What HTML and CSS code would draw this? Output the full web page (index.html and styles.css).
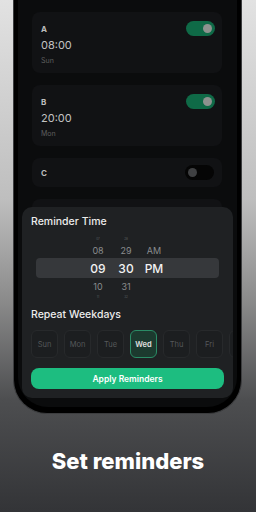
FILE: index.html
```html
<!DOCTYPE html>
<html lang="en">
<head>
    <meta charset="UTF-8">
    <meta name="viewport" content="width=device-width, initial-scale=1.0">
    <title>Set reminders</title>
    <link rel="stylesheet" href="styles.css">
</head>
<body>

<div class="phone">
    <div class="screen">
        <div class="cards">
            <div class="card">
                <div class="card-info">
                    <div class="card-name">A</div>
                    <div class="card-time">08:00</div>
                    <div class="card-days">Sun</div>
                </div>
                <div class="toggle on"><span class="knob"></span></div>
            </div>
            <div class="card">
                <div class="card-info">
                    <div class="card-name">B</div>
                    <div class="card-time">20:00</div>
                    <div class="card-days">Mon</div>
                </div>
                <div class="toggle on"><span class="knob"></span></div>
            </div>
            <div class="card card-small">
                <div class="card-info">
                    <div class="card-name">C</div>
                </div>
                <div class="toggle"><span class="knob"></span></div>
            </div>
            <div class="card card-small"></div>
        </div>

        <!-- bottom sheet -->
        <div class="sheet">
            <div class="sheet-title">Reminder Time</div>
            <div class="picker">
                <div class="pick-row far"><span>07</span><span>28</span><span></span></div>
                <div class="pick-row"><span>08</span><span>29</span><span>AM</span></div>
                <div class="pick-row selected"><span>09</span><span>30</span><span>PM</span></div>
                <div class="pick-row"><span>10</span><span>31</span><span></span></div>
                <div class="pick-row far"><span>11</span><span>32</span><span></span></div>
            </div>
            <div class="sheet-title">Repeat Weekdays</div>
            <div class="days">
                <div class="day">Sun</div>
                <div class="day">Mon</div>
                <div class="day">Tue</div>
                <div class="day active">Wed</div>
                <div class="day">Thu</div>
                <div class="day">Fri</div>
                <div class="day"></div>
            </div>
            <button class="apply-btn">Apply Reminders</button>
        </div>
    </div>
</div>

<h1 class="caption">Set reminders</h1>

</body>
</html>
```

FILE: styles.css
```css
body {
    margin: 0;
    width: 256px;
    height: 512px;
    overflow: hidden;
    font-family: 'Inter', 'Liberation Sans', sans-serif;
    background: linear-gradient(#e2e2e2 0px, #bebebe 200px, #8b8b8b 300px, #4d4e50 400px, #333437 512px);
}
.phone {
    box-sizing: border-box;
    width: 229px;
    height: 434px;
    margin: -20px 0 0 13px;
    padding: 0 4px 6px 4px;
    background-color: #000;
    border: 1px solid #3c3d3f;
    border-top: none;
    border-radius: 0 0 34px 34px;
}
.screen {
    position: relative;
    height: 100%;
    background-color: #0b0c0d;
    border-radius: 0 0 30px 30px;
    overflow: hidden;
}
.cards {
    display: flex;
    flex-direction: column;
    gap: 12px;
    padding: 32px 15px 0 14px;
}
.card {
    display: flex;
    justify-content: space-between;
    align-items: flex-start;
    background-color: #111214;
    border-radius: 8px;
    padding: 9px 7px 7px 9px;
}
.card-small {
    align-items: center;
    padding: 7px 8px 7px 9px;
    min-height: 15px;
}
.card-info {
    display: flex;
    flex-direction: column;
}
.card-name {
    font-size: 8px;
    font-weight: 700;
    line-height: 12px;
    color: #bdbdbd;
    margin-top: 2px;
}
.card-small .card-name {
    margin-top: 0;
}
.card-time {
    font-size: 11px;
    line-height: 15px;
    color: #c2c2c2;
    margin-top: 3px;
}
.card-days {
    font-size: 7px;
    line-height: 10px;
    color: #5f5f5f;
    margin-top: 3px;
}
.toggle {
    display: flex;
    align-items: center;
    box-sizing: border-box;
    width: 29px;
    height: 15px;
    padding: 0 3px;
    border-radius: 8px;
    background-color: #050505;
}
.toggle.on {
    background-color: #0f6a47;
    justify-content: flex-end;
}
.knob {
    width: 9px;
    height: 9px;
    border-radius: 50%;
    background-color: #3f4042;
}
.toggle.on .knob {
    background-color: #8e928f;
}

/* bottom sheet */
.sheet {
    position: absolute;
    left: 4px;
    right: 4px;
    bottom: 9px;
    padding: 7px 0 9px 9px;
    background-color: #1f2123;
    border-radius: 10px;
    overflow: hidden;
}
.sheet-title {
    font-size: 10.5px;
    font-weight: 500;
    line-height: 16px;
    color: #ececec;
}
.picker {
    margin: 6px 0 7px 0;
}
.pick-row {
    display: flex;
    height: 16px;
    align-items: center;
    padding-left: 53px;
    font-size: 9px;
    color: #8a8c8e;
}
.pick-row span {
    width: 28px;
    text-align: center;
}
.pick-row.selected {
    height: 20px;
    margin: 0 14px 0 5px;
    padding-left: 48px;
    background-color: #36383b;
    border-radius: 4px;
    font-size: 12px;
    font-weight: 500;
    color: #f2f2f2;
}
.pick-row.far {
    height: 6px;
    font-size: 3px;
    line-height: 6px;
    color: #5e6062;
}
.days {
    display: flex;
    gap: 6px;
    margin: 7px 0 10px 0;
}
.day {
    flex-shrink: 0;
    box-sizing: border-box;
    width: 27px;
    height: 28px;
    display: flex;
    align-items: center;
    justify-content: center;
    border: 1px solid #27292b;
    border-radius: 6px;
    background-color: #1c1e20;
    font-size: 7.5px;
    color: #55585a;
}
.day.active {
    border-color: #2a8c66;
    background-color: #1c3a2f;
    color: #e0e0e0;
    font-weight: 600;
}
.apply-btn {
    display: block;
    width: 193px;
    height: 21px;
    border: none;
    border-radius: 8px;
    background-color: #1dbd80;
    color: #fff;
    font-family: inherit;
    font-size: 8.5px;
    font-weight: 600;
    padding: 0;
}
.caption {
    margin: 33px 0 0 0;
    text-align: center;
    font-size: 22px;
    font-weight: 800;
    line-height: 28px;
    color: #fff;
}
```
